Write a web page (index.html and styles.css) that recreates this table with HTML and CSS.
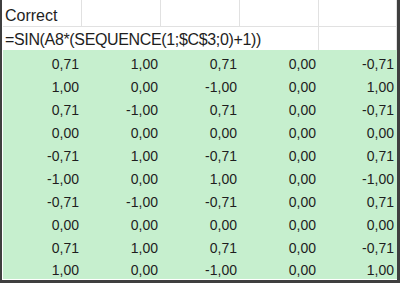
FILE: index.html
```html
<!DOCTYPE html>
<html>
<head>
<meta charset="utf-8">
<link rel="stylesheet" href="styles.css">
</head>
<body>
<div class="sheet">
  <div class="row head">
    <div class="cell">Correct</div>
    <div class="cell"></div>
    <div class="cell"></div>
    <div class="cell"></div>
    <div class="cell"></div>
  </div>
  <div class="row formula">
    <div class="cell span4">=SIN(A8*(SEQUENCE(1;$C$3;0)+1))</div>
    <div class="cell"></div>
  </div>
  <div class="data">
    <div class="num">0,71</div><div class="num">1,00</div><div class="num">0,71</div><div class="num">0,00</div><div class="num">-0,71</div>
    <div class="num">1,00</div><div class="num">0,00</div><div class="num">-1,00</div><div class="num">0,00</div><div class="num">1,00</div>
    <div class="num">0,71</div><div class="num">-1,00</div><div class="num">0,71</div><div class="num">0,00</div><div class="num">-0,71</div>
    <div class="num">0,00</div><div class="num">0,00</div><div class="num">0,00</div><div class="num">0,00</div><div class="num">0,00</div>
    <div class="num">-0,71</div><div class="num">1,00</div><div class="num">-0,71</div><div class="num">0,00</div><div class="num">0,71</div>
    <div class="num">-1,00</div><div class="num">0,00</div><div class="num">1,00</div><div class="num">0,00</div><div class="num">-1,00</div>
    <div class="num">-0,71</div><div class="num">-1,00</div><div class="num">-0,71</div><div class="num">0,00</div><div class="num">0,71</div>
    <div class="num">0,00</div><div class="num">0,00</div><div class="num">0,00</div><div class="num">0,00</div><div class="num">0,00</div>
    <div class="num">0,71</div><div class="num">1,00</div><div class="num">0,71</div><div class="num">0,00</div><div class="num">-0,71</div>
    <div class="num">1,00</div><div class="num">0,00</div><div class="num">-1,00</div><div class="num">0,00</div><div class="num">1,00</div>
  </div>
</div>
</body>
</html>
```

FILE: styles.css
```css
html, body {
  margin: 0;
  padding: 0;
  background: #ffffff;
}

.sheet {
  box-sizing: border-box;
  width: 400px;
  height: 283px;
  border-left: 2px solid #3f3f3f;
  border-right: 3px solid #3f3f3f;
  border-bottom: 3px solid #3f3f3f;
  padding-left: 1px;
  padding-bottom: 1px;
  background: #ffffff;
  font-family: "Liberation Sans", Arial, sans-serif;
  color: #1e1e1e;
  overflow: hidden;
}

.row {
  display: grid;
  grid-template-columns: 79px 79px 79px 79px 78px;
}

.head {
  height: 27px;
}

.head .cell {
  box-sizing: border-box;
  border-right: 1px solid #e1e1e1;
  border-bottom: 1px solid #e1e1e1;
  display: flex;
  align-items: flex-end;
  padding: 0 0 1px 2px;
  font-size: 16px;
  white-space: nowrap;
}

.formula {
  height: 23px;
}

.formula .cell {
  box-sizing: border-box;
  border-right: 1px solid #e1e1e1;
  display: flex;
  align-items: flex-end;
  padding: 0 0 1px 2px;
  font-size: 16px;
  letter-spacing: -0.35px;
  white-space: nowrap;
}

.span4 {
  grid-column: span 4;
}

.data {
  display: grid;
  grid-template-columns: 79px 79px 79px 79px 78px;
  grid-template-rows: repeat(9, 23px) 22px;
  background: #c6efce;
}

.num {
  display: flex;
  align-items: flex-end;
  justify-content: flex-end;
  padding: 0 3px 1px 0;
  font-size: 14px;
  color: #1e1e1e;
}
```
